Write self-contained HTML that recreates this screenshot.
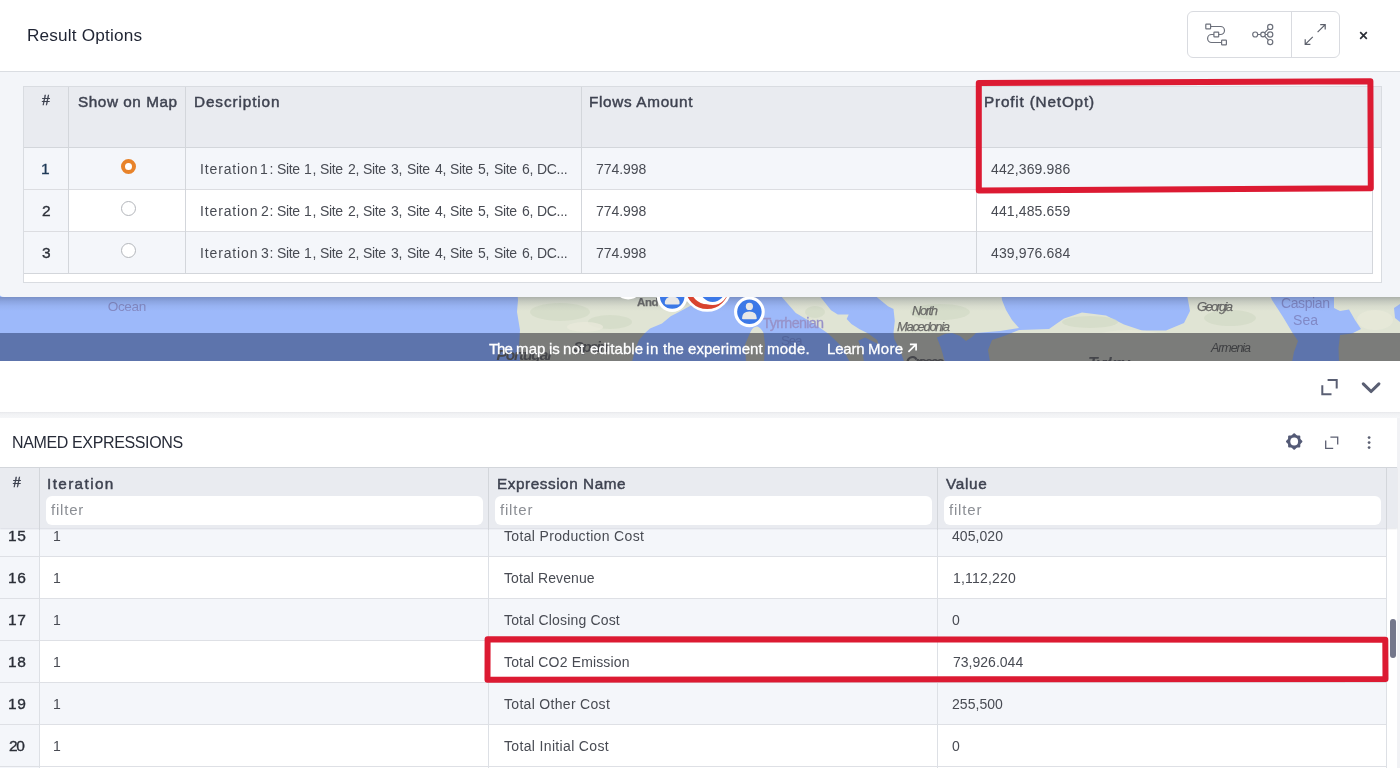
<!DOCTYPE html>
<html>
<head>
<meta charset="utf-8">
<title>Result Options</title>
<style>
*{box-sizing:border-box;margin:0;padding:0}
html,body{width:1400px;height:768px;overflow:hidden;background:#fff}
body{font-family:"Liberation Sans",sans-serif;color:#474a52;position:relative}
.abs{position:absolute}
.t{position:absolute;white-space:nowrap;line-height:1;will-change:transform}

/* map */
#map{position:absolute;left:0;top:290px;width:1400px;height:71px;background:#9bb7f8;overflow:hidden;will-change:transform}
#banner{display:none}

/* top panel */
#panel{position:absolute;left:-2px;top:-8px;width:1402px;height:305px;background:#f3f5f9;border-radius:0 0 0 6px}
#phead{position:absolute;left:0;top:0;width:1400px;height:72px;background:#fff;border-bottom:1px solid #dadde2}
#tbox{position:absolute;left:23px;top:86px;width:1359px;height:197px;background:#fff;border:1px solid #d9dce1}
.cell{position:absolute;border-right:1px solid #d3d6db;border-bottom:1px solid #d3d6db}
.hd{background:#e9ebf0}
.odd{background:#f4f6fa}
.evn{background:#fff}

/* bottom */
#sep{position:absolute;left:0;top:412px;width:1400px;height:6px;background:linear-gradient(#e7e8eb,#f1f2f4 30%,#f5f6f8)}
#bhead{position:absolute;left:0;top:467px;width:1397px;height:61px;background:#e9ebf0;border-top:1px solid #d3d6db;box-shadow:0 1px 1.5px rgba(40,50,80,.13)}
.flt{position:absolute;height:29px;background:#fff;border-radius:6px}
.brow{position:absolute;left:0;width:1386px;height:42px;border-bottom:1px solid #dee0e5}
.vl{position:absolute;width:1px;background:#d3d6db}
.hl{color:#3e4250;-webkit-text-stroke:.45px #3e4250}
.rn{color:#2b2f38;-webkit-text-stroke:.35px currentColor}
.rt{color:#484b53}
.bt{color:#fff;-webkit-text-stroke:.3px #fff}
.ft{color:#8b8e94}
</style>
</head>
<body>

<!-- MAP STRIP -->
<div id="map">
<svg width="1400" height="71" viewBox="0 290 1400 71">
<defs>
  <g id="land">
    <!-- Iberia / France -->
    <path d="M517 290L518 300L517 312L520 330L519 345L520 362L632 362L635 350L639 340L645 333L650 328.4L662 323.6L670.7 316.3L678 312.6L690 306L702 297L702 290Z"/>
    <!-- Sardinia -->
    <path d="M750 333Q753 326 757.5 326.6Q761 328 763.6 333L765 345L764 362L746 362L744.8 345Z"/>
    <!-- Italy -->
    <path d="M778 290L782.2 297.4L795.8 313L809.3 321.1L820.2 327.9L827 332.7L833.8 338.8L843.3 348.3L847.3 357.8L850 362L864 362L862.3 351L858.2 340.8L865 337.4L873.1 341.5L878.5 344.2L877.2 340.1L867.7 333.3L859.6 329.3L851.4 323.9L846.7 319.1L848.7 314.4L837.8 314.4L831 310.3L820.9 297.4L817 290Z"/>
    <!-- Balkans, Greece, Bulgaria -->
    <path d="M873 290L877.2 297.4L888 306.2L893.5 308.9L894.8 321.1L893.5 332.7L894.2 338.8L900.3 351L904.3 362L945 362L941 348L936.9 337.4L945 334L952 333L960 336L966 341L972 337L976 333L1000 331L1019 328L1012 320L1006 310L1002 300L1001 290Z"/>
    <!-- Turkey + Caucasus -->
    <path d="M990 362L988 350L992 340L1004 336L1019 330L1049 329L1064 318.5L1082 312.5L1106 315.5L1124 324.5L1142 330.5L1166 330.5L1184 323L1190 311L1188 300L1186 290L1268 290L1272 300L1283 317L1292 332L1298 341L1294 352L1292 362Z"/>
    <!-- East of Caspian -->
    <path d="M1334 290L1334 308L1340 311L1349 309.5L1355 320L1361 329L1352 333.5L1340 335L1338.5 348L1339 362L1400 362L1400 322L1395 318L1394 308L1400 304L1400 290Z"/>
  </g>
  <clipPath id="bclip"><rect x="0" y="333" width="1400" height="28"/></clipPath>
  <linearGradient id="shd" x1="0" y1="0" x2="0" y2="1"><stop offset="0" stop-color="#101830" stop-opacity=".25"/><stop offset=".3" stop-color="#101830" stop-opacity=".13"/><stop offset=".65" stop-color="#101830" stop-opacity=".04"/><stop offset="1" stop-color="#101830" stop-opacity="0"/></linearGradient>
</defs>
<rect x="0" y="290" width="1400" height="71" fill="#9db9fa"/>
<use href="#land" fill="#e0e4d4"/>
<!-- terrain mottling -->
<g fill="#d3dbc6" opacity=".7">
  <ellipse cx="560" cy="312" rx="30" ry="9"/><ellipse cx="610" cy="322" rx="22" ry="7"/><ellipse cx="940" cy="312" rx="30" ry="8"/>
  <ellipse cx="1090" cy="322" rx="28" ry="6"/><ellipse cx="1230" cy="318" rx="26" ry="8"/><ellipse cx="815" cy="312" rx="10" ry="6"/>
</g>
<g fill="#e8e9da" opacity=".8">
  <ellipse cx="585" cy="327" rx="18" ry="5"/><ellipse cx="1130" cy="335" rx="30" ry="5"/><ellipse cx="1375" cy="320" rx="18" ry="10"/>
</g>
<!-- map labels -->
<g font-family="Liberation Sans, sans-serif" font-size="13">
  <text x="107.8" y="310.8" fill="#858bc4" font-size="13.6" textLength="38.4">Ocean</text>
  <text x="762.5" y="327.6" fill="#9792c8" stroke="#9792c8" stroke-width=".3" textLength="61.5" font-size="14.4">Tyrrhenian</text>
  <text x="781" y="344.6" fill="#8f8fc9" textLength="21.5" font-size="13.5">Sea</text>
  <text x="1281" y="308" fill="#8189c6" textLength="49" font-size="14">Caspian</text>
  <text x="1293" y="324.5" fill="#8189c6" textLength="25" font-size="14">Sea</text>
  <g fill="#6a6a68" stroke="#6a6a68" stroke-width=".25" font-style="italic" font-size="13">
    <text x="637" y="306.3" font-style="normal" font-weight="bold" font-size="11.5" fill="#6d6d6c" textLength="21.6">And</text>
    <text x="912" y="315" textLength="26">North</text>
    <text x="897" y="331" textLength="53">Macedonia</text>
    <text x="1197" y="311" textLength="36">Georgia</text>
    <text x="1211" y="350" textLength="40" fill="#3c3c3c">Armenia</text>
    <text x="504" y="359" textLength="48" font-size="15" fill="#3c3c3c">Portugal</text>
    <text x="570" y="352" textLength="32" font-size="14" fill="#3c3c3c">Spain</text>
    <text x="1088" y="368" textLength="42" font-size="14" fill="#3c3c3c">Turkey</text>
    <text x="905" y="368" textLength="40" font-size="14" fill="#3c3c3c">Greece</text>
  </g>
</g>
<!-- banner overlay (explicit colours) -->
<g clip-path="url(#bclip)">
  <rect x="0" y="333" width="1400" height="28" fill="#5d74ac"/>
  <use href="#land" fill="#7b7c7a"/>
  <g font-family="Liberation Sans, sans-serif" font-style="italic" font-weight="bold" fill="#45464b">
    <text x="1211" y="351.6" textLength="40" font-size="12.5" font-weight="normal" fill="#3e3f42">Armenia</text>
    <text x="496.5" y="360" textLength="55" font-size="15.5">Portugal</text>
    <text x="573.6" y="352" textLength="35" font-size="15.5">Spain</text>
    <text x="1088" y="369" textLength="42" font-size="16">Turkey</text>
    <text x="905.5" y="368" textLength="39" font-size="16">Greece</text>
    <text x="781" y="344.6" textLength="21.5" font-size="13.5" font-style="normal" font-weight="normal" fill="#52649a">Sea</text>
  </g>
</g>
<!-- panel shadow -->
<rect x="0" y="297" width="1400" height="14" fill="url(#shd)"/>
<!-- markers -->
<g>
  <circle cx="628.2" cy="283.9" r="14" fill="#3b78e7" stroke="#fff" stroke-width="3"/>
  <!-- cluster -->
  <circle cx="707.2" cy="287.3" r="24.5" fill="#fff"/>
  <circle cx="707.2" cy="287.3" r="19.3" fill="none" stroke="#d8432f" stroke-width="4.9"/>
  <circle cx="712.6" cy="289.6" r="13.9" fill="#3b78e7" stroke="#fff" stroke-width="3"/>
  <!-- marker 2 -->
  <circle cx="672.2" cy="296.6" r="13.8" fill="#3b78e7" stroke="#fff" stroke-width="3.1"/>
  <path d="M664.8 303.6Q664.8 296.4 672.2 296.4Q679.6 296.4 679.6 303.6Q679.6 304.4 678.4 304.4H666Q664.8 304.4 664.8 303.6Z" fill="#e7e7e7"/>
  <!-- marker 1 -->
  <circle cx="749.4" cy="311.8" r="13.8" fill="#3b78e7" stroke="#fff" stroke-width="3.1"/>
  <circle cx="749.4" cy="306.4" r="3.6" fill="#e7e7e7"/>
  <path d="M742 318.2Q742 311.4 749.4 311.4Q756.8 311.4 756.8 318.2Q756.8 319.2 755.6 319.2H743.2Q742 319.2 742 318.2Z" fill="#e7e7e7"/>
</g>
</svg>
</div>
<div id="banner"></div>
<div class="t bt" id="bw0" style="left:488.50px;top:340.60px;font-size:15px;letter-spacing:-1.052px;">The</div><div class="t bt" id="bw1" style="left:515.90px;top:340.60px;font-size:15px;letter-spacing:0.131px;">map</div><div class="t bt" id="bw2" style="left:548.75px;top:340.60px;font-size:15px;letter-spacing:-0.083px;">is</div><div class="t bt" id="bw3" style="left:563.00px;top:340.60px;font-size:15px;letter-spacing:0.158px;">not</div><div class="t bt" id="bw4" style="left:589.75px;top:340.60px;font-size:15px;letter-spacing:0.078px;">editable</div><div class="t bt" id="bw5" style="left:645.50px;top:340.60px;font-size:15px;letter-spacing:0.667px;">in</div><div class="t bt" id="bw6" style="left:662.50px;top:340.60px;font-size:15px;letter-spacing:-0.005px;">the</div><div class="t bt" id="bw7" style="left:687.50px;top:340.60px;font-size:15px;letter-spacing:0.052px;">experiment</div><div class="t bt" id="bw8" style="left:766.50px;top:340.60px;font-size:15px;letter-spacing:0.245px;">mode.</div><div class="t bt" id="bw9" style="left:827.10px;top:340.60px;font-size:15px;letter-spacing:-0.180px;">Learn</div><div class="t bt" id="bw10" style="left:868.40px;top:340.60px;font-size:15px;letter-spacing:0.289px;">More</div>

<svg class="abs" style="left:905px;top:340px" width="16" height="16" viewBox="905 340 16 16" fill="none" stroke="#fff" stroke-width="1.7"><path d="M908.4 351.9L916 344.3M909.9 344.3H916.1V350.5"/></svg>


<!-- TOP PANEL -->
<div id="panel"></div>
<div id="phead"></div>
<div class="t " id="title" style="left:27.10px;top:27.44px;font-size:17.2px;letter-spacing:0.174px;color:#1f2433">Result Options</div>

<!-- header buttons -->
<div class="abs" style="left:1187px;top:11px;width:153px;height:47px;border:1px solid #d9dbe0;border-radius:6px;background:#fff"></div>
<div class="abs" style="left:1291px;top:12px;width:1px;height:45px;background:#d9dbe0"></div>
<svg class="abs" style="left:1195px;top:15px" width="190" height="40" viewBox="1195 15 190 40" fill="none" stroke="#6c707b" stroke-width="1.2">
  <!-- route icon -->
  <rect x="1205.8" y="24.2" width="4.8" height="4.6" rx=".6"/>
  <rect x="1213.9" y="32.2" width="4.8" height="4.6" rx=".6"/>
  <rect x="1221.6" y="40.2" width="4.8" height="4.6" rx=".6"/>
  <path d="M1210.6 26.5H1220.5a4 4 0 0 1 0 8H1218.7M1213.9 34.5H1211.6a4 4 0 0 0 0 8H1221.6"/>
  <!-- tree icon -->
  <circle cx="1255.2" cy="34.5" r="2.5"/>
  <circle cx="1263" cy="34.5" r="2.3"/>
  <circle cx="1270.2" cy="26.9" r="2.6"/>
  <circle cx="1270.2" cy="34.5" r="2.6"/>
  <circle cx="1270.2" cy="42.1" r="2.6"/>
  <path d="M1257.7 34.5H1260.7M1265.3 34.5H1267.6M1264.6 32.8L1268.4 28.8M1264.6 36.2L1268.4 40.2"/>
  <!-- expand arrows -->
  <path d="M1317.6 32.2L1325.2 24.6M1320.2 24.6H1325.2V29.6M1312.8 36.8L1305.2 44.4M1305.2 39.2V44.4H1310.4" stroke="#5c606b"/>
  <!-- close -->
  <path d="M1360.2 32.2L1366.8 38.8M1366.8 32.2L1360.2 38.8" stroke="#2b2e36" stroke-width="1.65"/>
</svg>

<div id="tbox"></div>
<!-- header row -->
<div class="abs hd" style="left:24px;top:87px;width:1357px;height:60px"></div>
<div class="abs" style="left:24px;top:147px;width:1357px;height:1px;background:#d3d6db"></div>
<!-- rows -->
<div class="abs odd" style="left:24px;top:148px;width:1348px;height:41px"></div>
<div class="abs" style="left:24px;top:189px;width:1348px;height:1px;background:#dcdde1"></div>
<div class="abs evn" style="left:24px;top:190px;width:1348px;height:41px"></div>
<div class="abs" style="left:24px;top:231px;width:1348px;height:1px;background:#dcdde1"></div>
<div class="abs odd" style="left:24px;top:232px;width:1348px;height:41px"></div>
<div class="abs" style="left:24px;top:273px;width:1348px;height:1px;background:#d3d6db"></div>
<div class="abs odd" style="left:24px;top:190px;width:44px;height:41px"></div>
<!-- column lines -->
<div class="vl" style="left:68px;top:87px;height:187px"></div>
<div class="vl" style="left:185px;top:87px;height:187px"></div>
<div class="vl" style="left:581px;top:87px;height:187px"></div>
<div class="vl" style="left:976px;top:87px;height:187px"></div>
<div class="vl" style="left:1372px;top:148px;height:126px"></div>

<!-- header labels -->
<div class="t hl" id="h0" style="left:41.90px;top:93.15px;font-size:14px;letter-spacing:0.000px;">#</div>
<div class="t hl" id="h1" style="left:77.70px;top:94.35px;font-size:15.3px;letter-spacing:0.557px;">Show on Map</div>
<div class="t hl" id="h2" style="left:194.00px;top:94.35px;font-size:15.3px;letter-spacing:0.899px;">Description</div>
<div class="t hl" id="h3" style="left:589.40px;top:94.35px;font-size:15.3px;letter-spacing:0.667px;">Flows Amount</div>
<div class="t hl" id="h4" style="left:984.40px;top:94.35px;font-size:15.3px;letter-spacing:0.821px;">Profit (NetOpt)</div>

<!-- row numbers -->
<div class="t rn" id="n1" style="left:41.45px;top:160.88px;font-size:15.5px;letter-spacing:0.000px;color:#1f3a57">1</div>
<div class="t rn" id="n2" style="left:41.95px;top:202.88px;font-size:15.5px;letter-spacing:0.000px;">2</div>
<div class="t rn" id="n3" style="left:41.95px;top:244.88px;font-size:15.5px;letter-spacing:0.000px;">3</div>

<!-- radios -->
<div class="abs" style="left:120.5px;top:159px;width:15px;height:15px;border-radius:50%;border:4.6px solid #e8832a;background:#fff"></div>
<div class="abs" style="left:120.5px;top:201px;width:15px;height:15px;border-radius:50%;border:1px solid #b3b6bb;background:#fff"></div>
<div class="abs" style="left:120.5px;top:243px;width:15px;height:15px;border-radius:50%;border:1px solid #b3b6bb;background:#fff"></div>

<!-- row text -->
<div class="t rt" id="d1_0" style="left:199.60px;top:161.85px;font-size:14px;letter-spacing:0.863px;">Iteration</div><div class="t rt" id="d1_1" style="left:259.50px;top:161.85px;font-size:14px;letter-spacing:1.614px;">1:</div><div class="t rt" id="d1_2" style="left:276.50px;top:161.85px;font-size:14px;letter-spacing:-0.379px;">Site</div><div class="t rt" id="d1_3" style="left:303.80px;top:161.85px;font-size:14px;letter-spacing:0.614px;">1,</div><div class="t rt" id="d1_4" style="left:319.92px;top:161.85px;font-size:14px;letter-spacing:-0.379px;">Site</div><div class="t rt" id="d1_5" style="left:348.14px;top:161.85px;font-size:14px;letter-spacing:-0.386px;">2,</div><div class="t rt" id="d1_6" style="left:363.34px;top:161.85px;font-size:14px;letter-spacing:-0.379px;">Site</div><div class="t rt" id="d1_7" style="left:391.48px;top:161.85px;font-size:14px;letter-spacing:-0.386px;">3,</div><div class="t rt" id="d1_8" style="left:406.76px;top:161.85px;font-size:14px;letter-spacing:-0.379px;">Site</div><div class="t rt" id="d1_9" style="left:434.82px;top:161.85px;font-size:14px;letter-spacing:-0.386px;">4,</div><div class="t rt" id="d1_10" style="left:450.18px;top:161.85px;font-size:14px;letter-spacing:-0.379px;">Site</div><div class="t rt" id="d1_11" style="left:478.16px;top:161.85px;font-size:14px;letter-spacing:-0.386px;">5,</div><div class="t rt" id="d1_12" style="left:493.60px;top:161.85px;font-size:14px;letter-spacing:-0.379px;">Site</div><div class="t rt" id="d1_13" style="left:521.50px;top:161.85px;font-size:14px;letter-spacing:-0.386px;">6,</div><div class="t rt" id="d1_14" style="left:536.50px;top:161.85px;font-size:14px;letter-spacing:-0.325px;">DC...</div>
<div class="t rt" id="d2_0" style="left:199.60px;top:203.85px;font-size:14px;letter-spacing:0.863px;">Iteration</div><div class="t rt" id="d2_1" style="left:260.50px;top:203.85px;font-size:14px;letter-spacing:0.614px;">2:</div><div class="t rt" id="d2_2" style="left:276.50px;top:203.85px;font-size:14px;letter-spacing:-0.379px;">Site</div><div class="t rt" id="d2_3" style="left:303.80px;top:203.85px;font-size:14px;letter-spacing:0.614px;">1,</div><div class="t rt" id="d2_4" style="left:319.92px;top:203.85px;font-size:14px;letter-spacing:-0.379px;">Site</div><div class="t rt" id="d2_5" style="left:348.14px;top:203.85px;font-size:14px;letter-spacing:-0.386px;">2,</div><div class="t rt" id="d2_6" style="left:363.34px;top:203.85px;font-size:14px;letter-spacing:-0.379px;">Site</div><div class="t rt" id="d2_7" style="left:391.48px;top:203.85px;font-size:14px;letter-spacing:-0.386px;">3,</div><div class="t rt" id="d2_8" style="left:406.76px;top:203.85px;font-size:14px;letter-spacing:-0.379px;">Site</div><div class="t rt" id="d2_9" style="left:434.82px;top:203.85px;font-size:14px;letter-spacing:-0.386px;">4,</div><div class="t rt" id="d2_10" style="left:450.18px;top:203.85px;font-size:14px;letter-spacing:-0.379px;">Site</div><div class="t rt" id="d2_11" style="left:478.16px;top:203.85px;font-size:14px;letter-spacing:-0.386px;">5,</div><div class="t rt" id="d2_12" style="left:493.60px;top:203.85px;font-size:14px;letter-spacing:-0.379px;">Site</div><div class="t rt" id="d2_13" style="left:521.50px;top:203.85px;font-size:14px;letter-spacing:-0.386px;">6,</div><div class="t rt" id="d2_14" style="left:536.50px;top:203.85px;font-size:14px;letter-spacing:-0.325px;">DC...</div>
<div class="t rt" id="d3_0" style="left:199.60px;top:245.85px;font-size:14px;letter-spacing:0.863px;">Iteration</div><div class="t rt" id="d3_1" style="left:260.50px;top:245.85px;font-size:14px;letter-spacing:0.614px;">3:</div><div class="t rt" id="d3_2" style="left:276.50px;top:245.85px;font-size:14px;letter-spacing:-0.379px;">Site</div><div class="t rt" id="d3_3" style="left:303.80px;top:245.85px;font-size:14px;letter-spacing:0.614px;">1,</div><div class="t rt" id="d3_4" style="left:319.92px;top:245.85px;font-size:14px;letter-spacing:-0.379px;">Site</div><div class="t rt" id="d3_5" style="left:348.14px;top:245.85px;font-size:14px;letter-spacing:-0.386px;">2,</div><div class="t rt" id="d3_6" style="left:363.34px;top:245.85px;font-size:14px;letter-spacing:-0.379px;">Site</div><div class="t rt" id="d3_7" style="left:391.48px;top:245.85px;font-size:14px;letter-spacing:-0.386px;">3,</div><div class="t rt" id="d3_8" style="left:406.76px;top:245.85px;font-size:14px;letter-spacing:-0.379px;">Site</div><div class="t rt" id="d3_9" style="left:434.82px;top:245.85px;font-size:14px;letter-spacing:-0.386px;">4,</div><div class="t rt" id="d3_10" style="left:450.18px;top:245.85px;font-size:14px;letter-spacing:-0.379px;">Site</div><div class="t rt" id="d3_11" style="left:478.16px;top:245.85px;font-size:14px;letter-spacing:-0.386px;">5,</div><div class="t rt" id="d3_12" style="left:493.60px;top:245.85px;font-size:14px;letter-spacing:-0.379px;">Site</div><div class="t rt" id="d3_13" style="left:521.50px;top:245.85px;font-size:14px;letter-spacing:-0.386px;">6,</div><div class="t rt" id="d3_14" style="left:536.50px;top:245.85px;font-size:14px;letter-spacing:-0.325px;">DC...</div>
<div class="t rt" id="f1" style="left:596.00px;top:161.85px;font-size:14px;letter-spacing:-0.070px;">774.998</div>
<div class="t rt" id="f2" style="left:596.00px;top:203.85px;font-size:14px;letter-spacing:-0.070px;">774.998</div>
<div class="t rt" id="f3" style="left:596.00px;top:245.85px;font-size:14px;letter-spacing:-0.070px;">774.998</div>
<div class="t rt" id="p1" style="left:990.60px;top:161.85px;font-size:14px;letter-spacing:0.133px;">442,369.986</div>
<div class="t rt" id="p2" style="left:990.60px;top:203.85px;font-size:14px;letter-spacing:0.133px;">441,485.659</div>
<div class="t rt" id="p3" style="left:990.60px;top:245.85px;font-size:14px;letter-spacing:0.133px;">439,976.684</div>

<!-- red annotation 1 -->
<svg class="abs" style="left:960px;top:70px" width="430" height="135" viewBox="960 70 430 135" fill="none" stroke="#dc1a32" stroke-width="6" stroke-linejoin="round">
  <path d="M978.8 83L1370.4 81.2L1370.8 188.2L978.8 190.4Z"/>
</svg>

<!-- BOTTOM -->
<!-- collapse bar icons -->
<svg class="abs" style="left:1310px;top:370px" width="90" height="34" viewBox="1310 370 90 34" fill="none" stroke="#5a5f73">
  <path d="M1322.3 385.2V394.2H1331.5M1327.6 380.1H1336.7V388.6" stroke-width="2"/>
  <path d="M1363.3 383.9L1371.1 391.5L1378.9 383.9" stroke-width="3.1" stroke-linecap="round" stroke-linejoin="round"/>
</svg>
<div class="abs" style="left:1397px;top:412px;width:3px;height:356px;background:#f1f2f5"></div>
<div id="sep"></div>
<div class="abs" style="left:0;top:418px;width:1397px;height:49px;background:#fff;border-radius:0 7px 0 0"></div>
<div class="t " id="ne" style="left:11.90px;top:435.46px;font-size:16px;letter-spacing:-0.366px;color:#272b38">NAMED EXPRESSIONS</div>
<svg class="abs" style="left:1280px;top:428px" width="100" height="28" viewBox="1280 428 100 28">
  <!-- gear -->
  <g transform="translate(1294.2 441.5)" fill="#545a76">
    <rect x="-6.1" y="-6.1" width="12.2" height="12.2" rx="1"/>
    <rect x="-6.1" y="-6.1" width="12.2" height="12.2" rx="1" transform="rotate(45)"/>
    <circle r="3.9" fill="#fff"/>
  </g>
  <path d="M1325.7 440.6V448.3H1333.2M1330.4 437.2H1337.7V444.6" fill="none" stroke="#5c6072" stroke-width="1.3"/>
  <circle cx="1369.1" cy="437.6" r="1.4" fill="#5c6072"/><circle cx="1369.1" cy="442.6" r="1.4" fill="#5c6072"/><circle cx="1369.1" cy="447.6" r="1.4" fill="#5c6072"/>
</svg>

<!-- rows -->
<div class="brow odd" style="top:515px"></div>
<div class="brow evn" style="top:557px"></div>
<div class="brow odd" style="top:599px"></div>
<div class="brow evn" style="top:641px"></div>
<div class="brow odd" style="top:683px"></div>
<div class="brow evn" style="top:725px"></div>
<div class="abs odd" style="left:0;top:529px;width:39px;height:239px"></div>
<div class="abs" style="left:1387px;top:529px;width:10px;height:239px;background:#fff"></div>
<div class="abs" style="left:0;top:556px;width:39px;height:1px;background:#dee0e5"></div>
<div class="abs" style="left:0;top:598px;width:39px;height:1px;background:#dee0e5"></div>
<div class="abs" style="left:0;top:640px;width:39px;height:1px;background:#dee0e5"></div>
<div class="abs" style="left:0;top:682px;width:39px;height:1px;background:#dee0e5"></div>
<div class="abs" style="left:0;top:724px;width:39px;height:1px;background:#dee0e5"></div>
<div class="abs" style="left:0;top:766px;width:39px;height:1px;background:#dee0e5"></div>
<div class="t rn" id="bn0" style="left:7.75px;top:528.28px;font-size:15.5px;letter-spacing:0.630px;">15</div>
<div class="t rt" id="bi0" style="left:53.10px;top:529.15px;font-size:14px;letter-spacing:0.000px;">1</div>
<div class="t rt" id="be0" style="left:503.60px;top:529.15px;font-size:14px;letter-spacing:0.341px;">Total Production Cost</div>
<div class="t rt" id="bv0" style="left:952.40px;top:529.15px;font-size:14px;letter-spacing:0.063px;">405,020</div>
<div class="t rn" id="bn1" style="left:7.75px;top:570.28px;font-size:15.5px;letter-spacing:0.630px;">16</div>
<div class="t rt" id="bi1" style="left:53.10px;top:571.15px;font-size:14px;letter-spacing:0.000px;">1</div>
<div class="t rt" id="be1" style="left:503.60px;top:571.15px;font-size:14px;letter-spacing:0.090px;">Total Revenue</div>
<div class="t rt" id="bv1" style="left:952.60px;top:571.15px;font-size:14px;letter-spacing:0.193px;">1,112,220</div>
<div class="t rn" id="bn2" style="left:7.75px;top:612.28px;font-size:15.5px;letter-spacing:0.630px;">17</div>
<div class="t rt" id="bi2" style="left:53.10px;top:613.15px;font-size:14px;letter-spacing:0.000px;">1</div>
<div class="t rt" id="be2" style="left:503.60px;top:613.15px;font-size:14px;letter-spacing:0.168px;">Total Closing Cost</div>
<div class="t rt" id="bv2" style="left:951.75px;top:613.15px;font-size:14px;letter-spacing:0.000px;">0</div>
<div class="t rn" id="bn3" style="left:7.75px;top:654.28px;font-size:15.5px;letter-spacing:0.630px;">18</div>
<div class="t rt" id="bi3" style="left:53.10px;top:655.15px;font-size:14px;letter-spacing:0.000px;">1</div>
<div class="t rt" id="be3" style="left:503.60px;top:655.15px;font-size:14px;letter-spacing:0.150px;">Total CO2 Emission</div>
<div class="t rt" id="bv3" style="left:952.60px;top:655.15px;font-size:14px;letter-spacing:0.013px;">73,926.044</div>
<div class="t rn" id="bn4" style="left:7.75px;top:696.28px;font-size:15.5px;letter-spacing:0.630px;">19</div>
<div class="t rt" id="bi4" style="left:53.10px;top:697.15px;font-size:14px;letter-spacing:0.000px;">1</div>
<div class="t rt" id="be4" style="left:503.60px;top:697.15px;font-size:14px;letter-spacing:0.309px;">Total Other Cost</div>
<div class="t rt" id="bv4" style="left:952.40px;top:697.15px;font-size:14px;letter-spacing:0.047px;">255,500</div>
<div class="t rn" id="bn5" style="left:8.75px;top:738.28px;font-size:15.5px;letter-spacing:-1.370px;">20</div>
<div class="t rt" id="bi5" style="left:53.10px;top:739.15px;font-size:14px;letter-spacing:0.000px;">1</div>
<div class="t rt" id="be5" style="left:503.60px;top:739.15px;font-size:14px;letter-spacing:0.345px;">Total Initial Cost</div>
<div class="t rt" id="bv5" style="left:951.75px;top:739.15px;font-size:14px;letter-spacing:0.000px;">0</div>
<div class="vl" style="left:39px;top:468px;height:300px;background:#dde0e5"></div>
<div class="vl" style="left:488px;top:468px;height:300px;background:#dde0e5"></div>
<div class="vl" style="left:937px;top:468px;height:300px;background:#dde0e5"></div>
<div class="vl" style="left:1386px;top:468px;height:300px;background:#dde0e5"></div>
<!-- header -->
<div id="bhead"></div>
<div class="vl" style="left:39px;top:468px;height:62px"></div>
<div class="vl" style="left:488px;top:468px;height:62px"></div>
<div class="vl" style="left:937px;top:468px;height:62px"></div>
<div class="vl" style="left:1386px;top:468px;height:62px"></div>
<div class="t hl" id="bh0" style="left:12.70px;top:474.65px;font-size:14px;letter-spacing:0.000px;">#</div>
<div class="t hl" id="bh1" style="left:47.30px;top:476.15px;font-size:15.3px;letter-spacing:1.379px;">Iteration</div>
<div class="t hl" id="bh2" style="left:497.00px;top:476.15px;font-size:15.3px;letter-spacing:0.556px;">Expression Name</div>
<div class="t hl" id="bh3" style="left:946.40px;top:476.15px;font-size:15.3px;letter-spacing:0.680px;">Value</div>
<div class="flt" style="left:46px;top:496px;width:437px"></div>
<div class="flt" style="left:495px;top:496px;width:437px"></div>
<div class="flt" style="left:944px;top:496px;width:437px"></div>
<div class="t ft" id="ff1" style="left:51.00px;top:502.40px;font-size:15px;letter-spacing:0.792px;">filter</div>
<div class="t ft" id="ff2" style="left:500.00px;top:502.40px;font-size:15px;letter-spacing:0.812px;">filter</div>
<div class="t ft" id="ff3" style="left:948.60px;top:502.40px;font-size:15px;letter-spacing:0.812px;">filter</div>
<!-- scrollbar thumb -->
<div class="abs" style="left:1389.6px;top:618.5px;width:6.6px;height:39px;border-radius:3.3px;background:#74778b"></div>

<!-- red annotation 2 -->
<svg class="abs" style="left:470px;top:625px" width="930" height="70" viewBox="470 625 930 70" fill="none" stroke="#dc1a32" stroke-width="6" stroke-linejoin="round">
  <path d="M487.6 639.2L1385.3 639.7L1385.5 679L487.5 679.7Z"/>
</svg>

</body>
</html>
